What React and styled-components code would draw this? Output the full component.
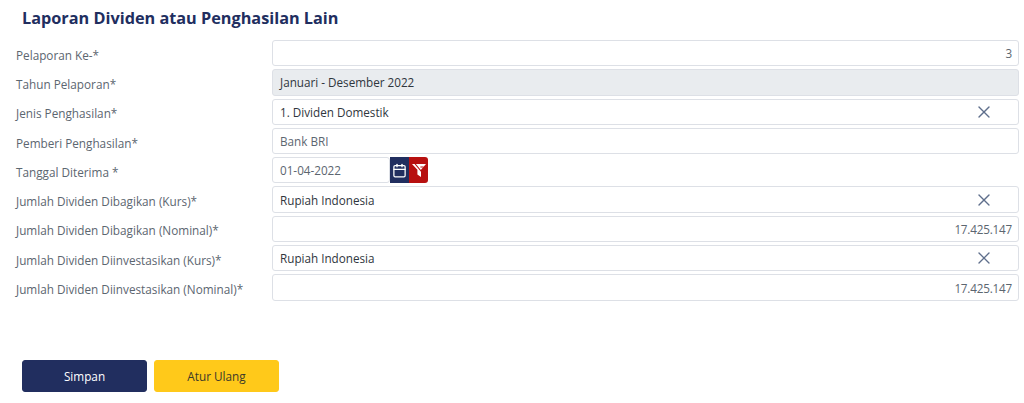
import React from "react";
import styled, { createGlobalStyle } from "styled-components";
import { X, Calendar } from "lucide-react";

const GlobalStyle = createGlobalStyle`
  html, body {
    margin: 0;
    padding: 0;
    background: #fff;
    font-family: "Open Sans", "Noto Sans", sans-serif;
  }
`;

const Page = styled.div`
  width: 1024px;
  height: 403px;
  overflow: hidden;
  box-sizing: border-box;
  padding: 8px 5px 0 16px;
`;

const Title = styled.h1`
  margin: 0 0 12px 6px;
  font-size: 16.25px;
  line-height: 20px;
  font-weight: 700;
  color: #212e5f;
`;

const Form = styled.div`
  display: flex;
  flex-direction: column;
  gap: 3px;
`;

const Row = styled.div`
  display: grid;
  grid-template-columns: 256px 747px;
  align-items: center;
  height: 26.3px;
`;

const Label = styled.div`
  padding-top: 3px;
  font-size: 11.75px;
  color: #5c6670;
  white-space: nowrap;
`;

const Field = styled.div`
  box-sizing: border-box;
  height: 26.3px;
  width: ${(p) => p.$width || "100%"};
  display: flex;
  align-items: center;
  justify-content: ${(p) => (p.$right ? "flex-end" : "space-between")};
  padding: 0 ${(p) => (p.$clear ? "24px" : "6px")} 0 7px;
  border: 1px solid #dde0e6;
  border-radius: 3px;
  background: ${(p) => (p.$disabled ? "#e9ecef" : "#fff")};
  font-size: 11.7px;
  letter-spacing: ${(p) => (p.$right ? "-0.2px" : "0")};
  color: ${(p) => (p.$strong ? "#2f363d" : "#5c6670")};
`;

const DateGroup = styled.div`
  display: flex;
  align-items: center;
`;

const IconButton = styled.div`
  width: 19px;
  height: 26px;
  display: flex;
  align-items: center;
  justify-content: center;
  background: ${(p) => p.$bg};
  color: #fff;
  border-radius: ${(p) => (p.$last ? "0 3px 3px 0" : "0")};
`;

const Actions = styled.div`
  display: flex;
  gap: 7px;
  margin: 59px 0 0 6px;
`;

const Button = styled.button`
  box-sizing: border-box;
  width: ${(p) => p.$width};
  height: 32px;
  border: 1px solid ${(p) => p.$bg};
  border-radius: 3px;
  background: ${(p) => p.$bg};
  color: ${(p) => p.$color};
  font-family: inherit;
  font-size: 11.75px;
`;

const ClearIcon = () => <X size={20} color="#5f6f8c" strokeWidth={1.6} />;

const FilterOff = () => (
  <svg width="16" height="16" viewBox="0 0 16 16" fill="none">
    <path d="M1 2h14L10 7.8V15L6.4 12.6V7.8Z" fill="#fff" />
    <path d="M3.4 1 12.8 12.4" stroke="#b71010" strokeWidth="1.1" />
    <path d="M9.4 5h3.2" stroke="#b71010" strokeWidth="1" />
  </svg>
);

export default function App() {
  return (
    <Page>
      <GlobalStyle />
      <Title>Laporan Dividen atau Penghasilan Lain</Title>
      <Form>
        <Row>
          <Label>Pelaporan Ke-*</Label>
          <Field $right>3</Field>
        </Row>
        <Row>
          <Label>Tahun Pelaporan*</Label>
          <Field $disabled $strong>Januari - Desember 2022</Field>
        </Row>
        <Row>
          <Label>Jenis Penghasilan*</Label>
          <Field $strong $clear>1. Dividen Domestik<ClearIcon /></Field>
        </Row>
        <Row>
          <Label>Pemberi Penghasilan*</Label>
          <Field>Bank BRI</Field>
        </Row>
        <Row>
          <Label>Tanggal Diterima *</Label>
          <DateGroup>
            <Field $width="118px">01-04-2022</Field>
            <IconButton $bg="#212e5f"><Calendar size={15} strokeWidth={2} /></IconButton>
            <IconButton $bg="#b71010" $last><FilterOff /></IconButton>
          </DateGroup>
        </Row>
        <Row>
          <Label>Jumlah Dividen Dibagikan (Kurs)*</Label>
          <Field $strong $clear>Rupiah Indonesia<ClearIcon /></Field>
        </Row>
        <Row>
          <Label>Jumlah Dividen Dibagikan (Nominal)*</Label>
          <Field $right>17.425.147</Field>
        </Row>
        <Row>
          <Label>Jumlah Dividen Diinvestasikan (Kurs)*</Label>
          <Field $strong $clear>Rupiah Indonesia<ClearIcon /></Field>
        </Row>
        <Row>
          <Label>Jumlah Dividen Diinvestasikan (Nominal)*</Label>
          <Field $right>17.425.147</Field>
        </Row>
      </Form>
      <Actions>
        <Button $width="125px" $bg="#212e5f" $color="#fff">Simpan</Button>
        <Button $width="125px" $bg="#ffc91a" $color="#3d3a2a">Atur Ulang</Button>
      </Actions>
    </Page>
  );
}
